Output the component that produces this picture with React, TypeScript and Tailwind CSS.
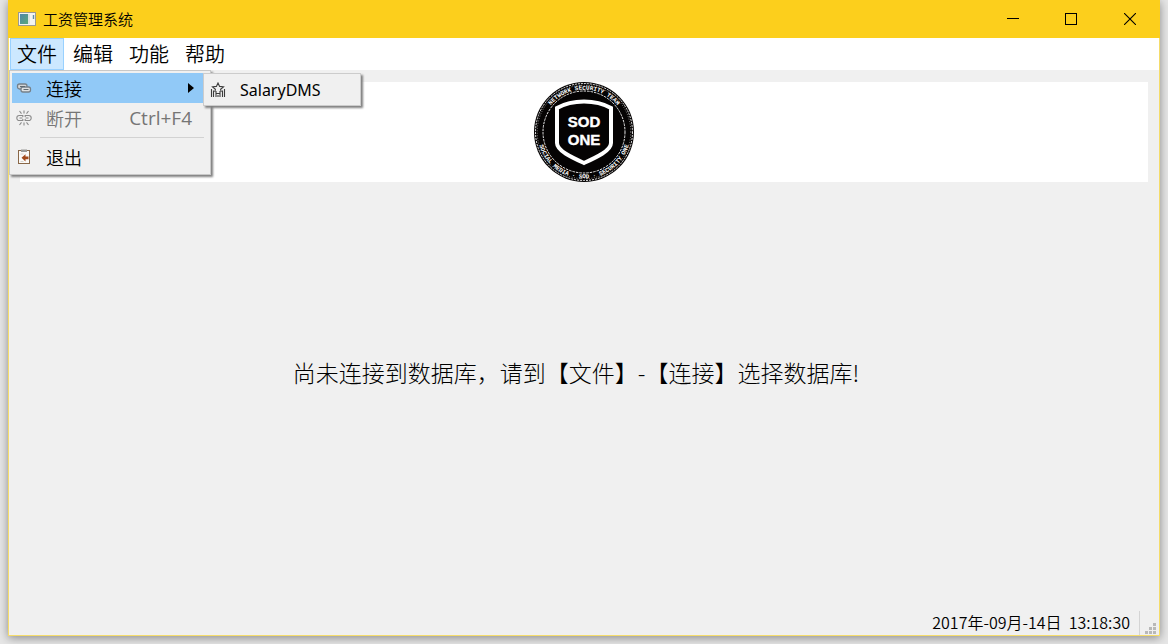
import { useState, type ReactNode } from "react";

function AppIcon() {
  return (
    <svg width="18" height="14" viewBox="0 0 18 14" aria-hidden="true">
      <defs>
        <linearGradient id="app-pane" x1="0" y1="0" x2="1" y2="1">
          <stop offset="0" stopColor="#4f86a8" />
          <stop offset="1" stopColor="#5aa878" />
        </linearGradient>
      </defs>
      <rect x="0.5" y="0.5" width="17" height="13" fill="#f4f4f0" stroke="#9a9a92" />
      <rect x="2" y="2" width="8" height="10" fill="url(#app-pane)" />
      <path d="M11 2v10" stroke="#c9d3d3" />
      <path d="M15.5 3v4" stroke="#5f8fa6" strokeWidth="1.4" />
    </svg>
  );
}

function LinkIcon() {
  return (
    <svg width="16" height="16" viewBox="0 0 16 16" fill="none" aria-hidden="true">
      <rect x="1.5" y="4" width="9.5" height="5" rx="2" stroke="#77818a" strokeWidth="1.3" fill="#d3d6d8" />
      <rect x="5" y="7" width="9.5" height="5" rx="2" stroke="#77818a" strokeWidth="1.3" fill="#dfe1e2" />
      <path d="M4 6.500h5M7.500 9.500h5" stroke="#5f6a72" />
    </svg>
  );
}

function UnlinkIcon() {
  return (
    <svg width="16" height="16" viewBox="0 0 16 16" fill="none" stroke="#8a8a8a" strokeWidth="1.1" aria-hidden="true">
      <path d="M6.8 7V5.500H3.300a2.500 2.500 0 0 0 0 5h3.500V9M3.500 8h3" />
      <path d="M9.200 7V5.500h3.500a2.500 2.500 0 0 1 0 5H9.200V9M9.500 8h3" />
      <path d="M8 .5v3M3.500 1l2 2.600M12.500 1l-2 2.600M8 12.500v3M3.500 15l2-2.600M12.500 15l-2-2.600" />
    </svg>
  );
}

function ExitIcon() {
  return (
    <svg width="16" height="16" viewBox="0 0 16 16" fill="none" aria-hidden="true">
      <rect x="2.500" y="1.500" width="11" height="13" fill="#fbfaf8" stroke="#8a6848" />
      <rect x="5" y="0.500" width="6" height="2.500" fill="#9a9a98" />
      <path d="M4.500 5h3M4.500 12.500h3" stroke="#d8d4cf" />
      <path d="M5.500 8.800l4-3.600v2.200h3v2.800h-3v2.200z" fill="#a34a1c" />
    </svg>
  );
}

function DatabaseIcon() {
  return (
    <svg width="16" height="16" viewBox="0 0 16 16" fill="none" stroke="#3c3c3c" strokeWidth="1.1" aria-hidden="true">
      <path d="M4.800 10l.6-2.700-2.900-2.500 3.900-.4L8 1l1.600 3.400 3.900.4-2.900 2.500.6 2.700" />
      <path d="M1.500 7v8M3.500 8.500V15M6 9v6M10 9v6M12.500 8.500V15M14.500 7v8M6 11.500h4M8 13v2" />
    </svg>
  );
}

function Logo() {
  return (
    <svg width="100" height="100" viewBox="0 0 100 100" role="img" aria-label="SOD ONE">
      <defs>
        <path id="ring-top" d="M7.500 50a42.500 42.500 0 0 1 85 0" />
        <path id="ring-bottom" d="M3.500 50a46.500 46.500 0 0 0 93 0" />
      </defs>
      <circle cx="50" cy="50" r="50" fill="#050303" />
      <g fill="none" stroke="#fff">
        <circle cx="50" cy="50" r="48.500" strokeWidth="0.9" strokeDasharray="2 1" />
        <circle cx="50" cy="50" r="46.800" strokeWidth="0.5" strokeDasharray="1 1.500" />
        <circle cx="50" cy="50" r="41" strokeWidth="0.9" strokeDasharray="2.500 1" />
        <path d="M50 19.500C60 19.500 69 21.500 77 26V61C77 69 61 76 50 81 39 76 23 69 23 61V26C31 21.500 40 19.500 50 19.500Z" strokeWidth="4" />
      </g>
      <g fill="#fff" className="font-['Liberation_Mono',monospace] text-[6px] font-bold" textAnchor="middle">
        <text>
          <textPath href="#ring-top" startOffset="50%">NETWORK SECURITY TEAM</textPath>
        </text>
        <text>
          <textPath href="#ring-bottom" startOffset="50%">SOCIAL MEDIA · SOD · SECURITY ONE</textPath>
        </text>
      </g>
      <g fill="#fff" stroke="#fff" strokeWidth="0.4" className="font-['Liberation_Sans',sans-serif] text-[15px] font-bold" textAnchor="middle">
        <text x="50" y="45">SOD</text>
        <text x="50" y="63">ONE</text>
      </g>
    </svg>
  );
}

function MenuRow({ icon, label, shortcut, disabled, active, arrow }: {
  icon: ReactNode;
  label: string;
  shortcut?: string;
  disabled?: boolean;
  active?: boolean;
  arrow?: boolean;
}) {
  const tone = active ? "bg-[#91c9f7]" : "enabled:hover:bg-[#91c9f7]";
  return (
    <button
      type="button"
      role="menuitem"
      disabled={disabled}
      aria-haspopup={arrow ? "menu" : undefined}
      className={`flex h-[30px] w-full items-center pl-1 text-[18px] leading-6 disabled:text-[#757575] ${tone}`}
    >
      {icon}
      <span className="ml-[14px]">{label}</span>
      {shortcut && <span className="mr-4 ml-auto font-['Open_Sans','Noto_Sans',sans-serif] text-[19px] font-normal">{shortcut}</span>}
      {arrow && (
        <svg className="mr-[10px] ml-auto" width="6" height="10" viewBox="0 0 6 10" aria-hidden="true">
          <path d="M0 0l6 5-6 5z" />
        </svg>
      )}
    </button>
  );
}

function FileMenu() {
  return (
    <div role="menu" aria-label="文件" className="absolute top-full left-0 z-10 w-[202px] border border-[#c8c8c8] bg-[#f0f0f0] p-[2px] shadow-[2px_2px_2px_#808080]">
      <div className="relative mr-1">
        <MenuRow icon={<LinkIcon />} label="连接" active arrow />
        <div role="menu" aria-label="连接" className="absolute top-0 left-[191px] w-[158px] border border-[#cccccc] bg-[#f0f0f0] shadow-[2px_2px_2px_#808080]">
          <button type="button" role="menuitem" className="flex h-[31px] w-full items-center pl-[6px] text-[16px] hover:bg-[#91c9f7]">
            <DatabaseIcon />
            <span className="ml-[14px] font-['Noto_Sans','Open_Sans',sans-serif] font-normal">SalaryDMS</span>
          </button>
        </div>
      </div>
      <MenuRow icon={<UnlinkIcon />} label="断开" shortcut="Ctrl+F4" disabled />
      <hr className="my-1 mr-1 ml-7 border-[#d2d2d2]" />
      <MenuRow icon={<ExitIcon />} label="退出" />
    </div>
  );
}

const menus = ["文件", "编辑", "功能", "帮助"];

export default function App() {
  const [open, setOpen] = useState<string | null>("文件");

  return (
    <div className="flex min-h-screen bg-[#e6e6e6] px-2 pb-2 font-['Noto_Sans_CJK_SC',sans-serif] font-[350] text-black">
      <div className="flex flex-1 flex-col border-x border-b border-[#f5dc6a] bg-[#f0f0f0] shadow-[0_2px_9px_#0006]">
        <header className="-mx-px flex h-[38px] items-center bg-[#fccf1c] pl-[10px]">
          <AppIcon />
          <h1 className="ml-[7px] text-[15px] leading-5">工资管理系统</h1>
          <div className="ml-auto flex h-full">
            <button type="button" aria-label="最小化" className="flex w-[58px] items-center justify-center">
              <svg width="12" height="12" viewBox="0 0 12 12"><path d="M0 5.500h12" stroke="#000" /></svg>
            </button>
            <button type="button" aria-label="最大化" className="flex w-[58px] items-center justify-center">
              <svg width="12" height="12" viewBox="0 0 12 12"><rect x="0.5" y="0.5" width="11" height="11" fill="none" stroke="#000" /></svg>
            </button>
            <button type="button" aria-label="关闭" className="flex w-[60px] items-center justify-center">
              <svg width="12" height="12" viewBox="0 0 12 12"><path d="M0 0l12 12M12 0L0 12" stroke="#000" strokeWidth="1.1" /></svg>
            </button>
          </div>
        </header>

        <nav className="relative flex h-8 gap-[2px] bg-white pl-px" role="menubar" aria-label="主菜单">
          {menus.map((name) => (
            <button
              key={name}
              type="button"
              role="menuitem"
              onClick={() => setOpen(open === name ? null : name)}
              className={`border px-[6px] text-[20px] leading-[30px] ${open === name ? "border-[#99d1ff] bg-[#cce8ff]" : "border-transparent"}`}
            >
              {name}
            </button>
          ))}
          {open === "文件" && <FileMenu />}
        </nav>

        <main className="flex flex-1 flex-col px-[11px] pt-3">
          <div className="flex justify-center bg-white">
            <Logo />
          </div>
          <p className="flex flex-1 items-center justify-center pr-4 pb-12 text-[23px] font-light">
            尚未连接到数据库，请到【文件】-【连接】选择数据库!
          </p>
        </main>

        <footer className="flex h-6 items-stretch justify-end pr-[2px]">
          <time className="text-[16px] leading-[22px] whitespace-pre" dateTime="2017-09-14T13:18:30">2017年-09月-14日  13:18:30</time>
          <span className="ml-[9px] border-l border-[#d4d4d4]" />
          <svg className="ml-[5px] self-end" width="12" height="12" viewBox="0 0 12 12" fill="#b8b8b8" aria-hidden="true">
            <path d="M8 0h3v3H8zM4 4h3v3H4zM8 4h3v3H8zM0 8h3v3H0zM4 8h3v3H4zM8 8h3v3H8z" />
          </svg>
        </footer>
      </div>
    </div>
  );
}
